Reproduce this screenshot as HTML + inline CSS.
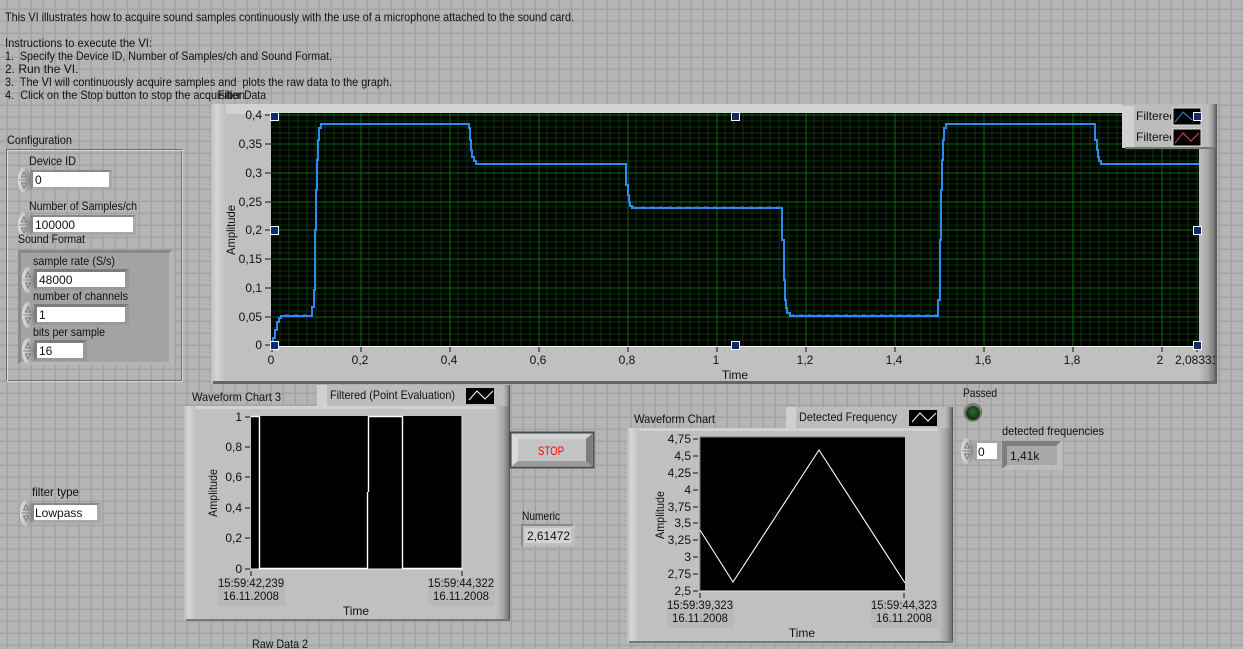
<!DOCTYPE html>
<html><head><meta charset="utf-8"><style>
html,body{margin:0;padding:0;background:#b4b4b4}
svg{display:block}
text{font-family:"Liberation Sans",sans-serif;font-size:12px;fill:#111}
.e{text-anchor:end}.m{text-anchor:middle}
</style></head><body>
<svg width="1243" height="649" viewBox="0 0 1243 649" xmlns="http://www.w3.org/2000/svg">
<defs>
<pattern id="bg" x="6" y="8" width="12" height="12" patternUnits="userSpaceOnUse">
<rect width="12" height="12" fill="#b4b4b4"/><rect x="0" width="1" height="12" fill="#adadad"/><rect y="0" width="12" height="1" fill="#adadad"/><rect x="1" width="1" height="12" fill="#a2a2a2"/><rect y="1" width="12" height="1" fill="#a2a2a2"/>
</pattern>
<linearGradient id="pl" x1="0" x2="1" y1="0" y2="0"><stop offset="0" stop-color="#bdbdbd"/><stop offset=".35" stop-color="#d6d6d6"/><stop offset="1" stop-color="#c0c0c0"/></linearGradient>
<linearGradient id="pr" x1="0" x2="1" y1="0" y2="0"><stop offset="0" stop-color="#c0c0c0"/><stop offset=".5" stop-color="#a8a8a8"/><stop offset="1" stop-color="#6a6a6a"/></linearGradient>
<linearGradient id="sp" x1="0" x2="1" y1="0" y2="0"><stop offset="0" stop-color="#e0e0e0"/><stop offset=".5" stop-color="#c4c4c4"/><stop offset="1" stop-color="#808080"/></linearGradient>
<radialGradient id="led" cx=".5" cy=".4" r=".6"><stop offset="0" stop-color="#2f6a30"/><stop offset="1" stop-color="#0c2c0e"/></radialGradient>
<symbol id="spin" viewBox="0 0 12 26" width="12" height="26">
<ellipse cx="6" cy="13" rx="6" ry="13" fill="url(#sp)"/><path d="M1 13H11" stroke="#888"/><path d="M6 5L3.5 10H8.5Z" fill="none" stroke="#777"/><path d="M6 21L3.5 16H8.5Z" fill="none" stroke="#777"/>
</symbol>
<symbol id="mk" viewBox="0 0 9 9" width="9" height="9"><rect x=".5" y=".5" width="8" height="8" fill="#0c2a6c" stroke="#fff"/></symbol>
</defs>
<rect width="1243" height="649" fill="url(#bg)"/>

<!-- top text -->
<text x="5" y="21" textLength="569" lengthAdjust="spacingAndGlyphs">This VI illustrates how to acquire sound samples continuously with the use of a microphone attached to the sound card.</text>
<text x="5" y="47" textLength="147" lengthAdjust="spacingAndGlyphs">Instructions to execute the VI:</text>
<text x="5" y="60" textLength="327" lengthAdjust="spacingAndGlyphs" xml:space="preserve">1.  Specify the Device ID, Number of Samples/ch and Sound Format.</text>
<text x="5" y="73">2.  Run the VI.</text>
<text x="5" y="86" textLength="387" lengthAdjust="spacingAndGlyphs" xml:space="preserve">3.  The VI will continuously acquire samples and  plots the raw data to the graph.</text>
<text x="5" y="99" textLength="240" lengthAdjust="spacingAndGlyphs" xml:space="preserve">4.  Click on the Stop button to stop the acquisition</text>
<text x="218" y="99" textLength="48" lengthAdjust="spacingAndGlyphs">Filter Data</text>

<!-- main graph panel -->
<rect x="211" y="104" width="1005" height="280" fill="#c0c0c0"/>
<rect x="211" y="104" width="1005" height="10" fill="#d2d2d2"/>
<rect x="211" y="104" width="15" height="278" fill="url(#pl)"/>
<rect x="1199" y="104" width="17" height="278" fill="url(#pr)"/>
<rect x="1215" y="104" width="2" height="280" fill="#5e5e5e"/>
<rect x="213" y="381" width="1004" height="3" fill="#666"/>
<rect x="271" y="113" width="928" height="233" fill="#000"/>
<g stroke="#0a360a" stroke-width="1" shape-rendering="crispEdges">
<path d="M280 113V346M289 113V346M298 113V346M307 113V346M316 113V346M325 113V346M334 113V346M343 113V346M352 113V346M369 113V346M378 113V346M387 113V346M396 113V346M405 113V346M414 113V346M423 113V346M432 113V346M441 113V346M458 113V346M467 113V346M476 113V346M485 113V346M494 113V346M503 113V346M512 113V346M521 113V346M530 113V346M547 113V346M556 113V346M565 113V346M574 113V346M583 113V346M592 113V346M601 113V346M610 113V346M619 113V346M636 113V346M645 113V346M654 113V346M663 113V346M672 113V346M681 113V346M690 113V346M699 113V346M708 113V346M725 113V346M734 113V346M743 113V346M752 113V346M761 113V346M770 113V346M779 113V346M788 113V346M797 113V346M814 113V346M823 113V346M832 113V346M841 113V346M850 113V346M859 113V346M868 113V346M877 113V346M886 113V346M903 113V346M912 113V346M921 113V346M930 113V346M939 113V346M948 113V346M957 113V346M966 113V346M975 113V346M992 113V346M1001 113V346M1010 113V346M1019 113V346M1028 113V346M1037 113V346M1046 113V346M1055 113V346M1064 113V346M1081 113V346M1090 113V346M1099 113V346M1108 113V346M1117 113V346M1126 113V346M1135 113V346M1144 113V346M1153 113V346M1170 113V346M1179 113V346M1188 113V346M1197 113V346"/>
<path d="M271 121H1199M271 127H1199M271 133H1199M271 138H1199M271 150H1199M271 156H1199M271 161H1199M271 167H1199M271 179H1199M271 184H1199M271 190H1199M271 196H1199M271 207H1199M271 213H1199M271 219H1199M271 225H1199M271 236H1199M271 242H1199M271 248H1199M271 253H1199M271 265H1199M271 271H1199M271 276H1199M271 282H1199M271 294H1199M271 299H1199M271 305H1199M271 311H1199M271 322H1199M271 328H1199M271 334H1199M271 340H1199"/>
</g>
<g stroke="#0c700c" stroke-width="1" shape-rendering="crispEdges">
<path d="M361 113V346M450 113V346M539 113V346M628 113V346M717 113V346M806 113V346M895 113V346M984 113V346M1073 113V346M1162 113V346"/>
<path d="M271 115H1199M271 144H1199M271 173H1199M271 202H1199M271 230H1199M271 259H1199M271 288H1199M271 317H1199"/>
</g>
<rect x="271" y="346" width="928" height="1" fill="#fff"/>
<polyline fill="none" stroke="#2a8cf0" stroke-width="2" shape-rendering="crispEdges" points="272,345 273,345 273,338 275,338 275,330 277,330 277,322 279,322 279,318 281,318 281,316 312,316 312,307 314,307 314,290 315,290 315,230 316,230 316,190 317,190 317,160 318,160 318,140 319,140 319,128 321,128 321,124 469,124 469,128 470,128 470,140 471,140 471,150 472,150 472,157 474,157 474,161 476,161 476,164 626,164 626,185 628,185 628,195 629,195 629,202 630,202 630,206 632,206 632,208 782,208 782,240 784,240 784,280 785,280 785,300 786,300 786,308 787,308 787,313 790,313 790,316 938,316 938,300 940,300 940,240 941,240 941,190 942,190 942,160 943,160 943,140 944,140 944,128 946,128 946,124 1095,124 1095,140 1097,140 1097,150 1098,150 1098,157 1099,157 1099,161 1101,161 1101,164 1199,164"/>
<path d="M632 207H782M790 315H938M285 315H312" stroke="#2a8cf0" stroke-width="1" stroke-dasharray="4 5" shape-rendering="crispEdges"/>

<!-- y ticks -->
<g stroke="#111" shape-rendering="crispEdges"><path d="M265 115H271M265 144H271M265 173H271M265 202H271M265 230H271M265 259H271M265 288H271M265 317H271M265 345H271"/>
<path d="M272 347V352M361 347V352M450 347V352M539 347V352M628 347V352M717 347V352M806 347V352M895 347V352M984 347V352M1073 347V352M1162 347V352M1197 347V352"/></g>
<text class="e" x="262" y="119">0,4</text><text class="e" x="262" y="148">0,35</text><text class="e" x="262" y="177">0,3</text><text class="e" x="262" y="206">0,25</text><text class="e" x="262" y="234">0,2</text><text class="e" x="262" y="263">0,15</text><text class="e" x="262" y="292">0,1</text><text class="e" x="262" y="321">0,05</text><text class="e" x="262" y="349">0</text>
<text class="m" x="271" y="364">0</text><text class="m" x="360" y="364">0,2</text><text class="m" x="449" y="364">0,4</text><text class="m" x="538" y="364">0,6</text><text class="m" x="627" y="364">0,8</text><text class="m" x="716" y="364">1</text><text class="m" x="805" y="364">1,2</text><text class="m" x="894" y="364">1,4</text><text class="m" x="983" y="364">1,6</text><text class="m" x="1072" y="364">1,8</text><text class="m" x="1160" y="364">2</text>
<svg x="1175" y="350" width="40" height="20"><text x="0" y="14">2,083312</text></svg>
<text class="m" x="735" y="379">Time</text>
<text class="m" transform="translate(235,230) rotate(-90)" textLength="50" lengthAdjust="spacingAndGlyphs">Amplitude</text>

<!-- legend top right -->
<rect x="1122" y="104" width="94" height="44" fill="#bcbcbc"/>
<rect x="1122" y="106" width="12" height="42" fill="#d2d2d2"/>
<rect x="1207" y="104" width="9" height="44" fill="url(#pr)"/>
<rect x="1125" y="147" width="90" height="2" fill="#777"/>
<svg x="1136" y="108" width="35" height="18"><text x="0" y="12">Filtered</text></svg>
<svg x="1136" y="129" width="35" height="18"><text x="0" y="12">Filtered</text></svg>
<rect x="1173" y="108" width="28" height="17" fill="#000" stroke="#ddd"/>
<polyline points="1175,122 1183,112 1192,120" fill="none" stroke="#2a8cf0"/>
<rect x="1173" y="129" width="28" height="17" fill="#000" stroke="#ddd"/>
<polyline points="1175,143 1183,133 1191,141 1199,133" fill="none" stroke="#e05050"/>

<use href="#mk" x="270" y="112"/><use href="#mk" x="731" y="112"/><use href="#mk" x="1193" y="112"/>
<use href="#mk" x="270" y="226"/><use href="#mk" x="1193" y="226"/>
<use href="#mk" x="270" y="341"/><use href="#mk" x="731" y="341"/><use href="#mk" x="1193" y="341"/>

<!-- Configuration -->
<text x="7" y="144" textLength="65" lengthAdjust="spacingAndGlyphs">Configuration</text>
<rect x="6.5" y="149.5" width="175" height="231" fill="none" stroke="#6e6e6e"/>
<rect x="7.5" y="150.5" width="175" height="231" fill="none" stroke="#d8d8d8"/>
<text x="29" y="165" textLength="47" lengthAdjust="spacingAndGlyphs">Device ID</text>
<rect x="30" y="170" width="82" height="20" fill="#a8a8a8"/><path d="M30 190V170H112L109 172H33V187Z" fill="#888"/>
<rect x="33" y="172" width="76" height="15" fill="#fff"/>
<text x="35" y="184">0</text>
<use href="#spin" x="18" y="167"/>
<text x="29" y="210" textLength="108" lengthAdjust="spacingAndGlyphs">Number of Samples/ch</text>
<rect x="30" y="215" width="106" height="20" fill="#a8a8a8"/><path d="M30 235V215H136L133 217H33V232Z" fill="#888"/>
<rect x="33" y="217" width="100" height="15" fill="#fff"/>
<text x="35" y="229">100000</text>
<use href="#spin" x="18" y="212"/>
<text x="18" y="243" textLength="67" lengthAdjust="spacingAndGlyphs">Sound Format</text>
<rect x="18" y="250" width="155" height="115" fill="#a3a3a3"/>
<path d="M18 365V250H173L170 253H21V362Z" fill="#8a8a8a"/>
<path d="M173 250V365H18L21 362H169V253Z" fill="#b6b6b6"/>
<text x="33" y="265" textLength="82" lengthAdjust="spacingAndGlyphs">sample rate (S/s)</text>
<rect x="34" y="269" width="95" height="21" fill="#989898"/><path d="M34 290V269H129L125 272H37V287Z" fill="#7c7c7c"/>
<rect x="37" y="272" width="88" height="15" fill="#fff"/>
<text x="39" y="284">48000</text>
<use href="#spin" x="22" y="267"/>
<text x="33" y="300" textLength="95" lengthAdjust="spacingAndGlyphs">number of channels</text>
<rect x="34" y="304" width="95" height="21" fill="#989898"/><path d="M34 325V304H129L125 307H37V322Z" fill="#7c7c7c"/>
<rect x="37" y="307" width="88" height="15" fill="#fff"/>
<text x="39" y="319">1</text>
<use href="#spin" x="22" y="302"/>
<text x="33" y="336" textLength="72" lengthAdjust="spacingAndGlyphs">bits per sample</text>
<rect x="34" y="340" width="53" height="21" fill="#989898"/><path d="M34 361V340H87L83 343H37V358Z" fill="#7c7c7c"/>
<rect x="37" y="343" width="46" height="15" fill="#fff"/>
<text x="39" y="355">16</text>
<use href="#spin" x="22" y="338"/>

<!-- filter type -->
<text x="32" y="496" textLength="47" lengthAdjust="spacingAndGlyphs">filter type</text>
<rect x="31" y="503" width="70" height="20" fill="#a8a8a8"/><path d="M31 523V503H101L97 505H34V520Z" fill="#888"/>
<rect x="34" y="505" width="63" height="15" fill="#fff"/>
<text x="35" y="517">Lowpass</text>
<use href="#spin" x="20" y="500"/>

<!-- Chart 3 -->
<text x="192" y="401" textLength="89" lengthAdjust="spacingAndGlyphs">Waveform Chart 3</text>
<rect x="317" y="385" width="192" height="21" fill="#bcbcbc"/>
<rect x="317" y="385" width="10" height="21" fill="#d0d0d0"/>
<rect x="502" y="385" width="8" height="21" fill="url(#pr)"/>
<text x="330" y="399" textLength="125" lengthAdjust="spacingAndGlyphs">Filtered (Point Evaluation)</text>
<rect x="466" y="388" width="28" height="16" fill="#000"/>
<polyline points="469,400 477,391 485,399 493,391" fill="none" stroke="#fff"/>
<rect x="184" y="406" width="326" height="215" fill="#c0c0c0"/>
<rect x="184" y="406" width="326" height="3" fill="#d2d2d2"/>
<rect x="184" y="406" width="12" height="214" fill="url(#pl)"/>
<rect x="496" y="406" width="14" height="214" fill="url(#pr)"/>
<rect x="509" y="385" width="1" height="236" fill="#555"/>
<rect x="186" y="619" width="324" height="2" fill="#777"/>
<rect x="251" y="416" width="211" height="153" fill="#000"/>
<path d="M251 569H462V416" fill="none" stroke="#e8e8e8"/>
<path d="M251 416.500H259.500V568.500H367.500V492M368.500 492V416.500H402.500V568.500H462" fill="none" stroke="#fff" stroke-width="1.400"/>
<g stroke="#111" shape-rendering="crispEdges"><path d="M245 417H250M245 447H250M245 477H250M245 508H250M245 538H250M245 569H250M251 571V576M462 571V576"/></g>
<text class="e" x="242" y="421">1</text><text class="e" x="242" y="451">0,8</text><text class="e" x="242" y="481">0,6</text><text class="e" x="242" y="512">0,4</text><text class="e" x="242" y="542">0,2</text><text class="e" x="242" y="573">0</text>
<text class="m" transform="translate(217,493) rotate(-90)" textLength="48" lengthAdjust="spacingAndGlyphs">Amplitude</text>
<rect x="218" y="578" width="67" height="28" fill="#b8b8b8"/><rect x="428" y="578" width="67" height="28" fill="#b8b8b8"/>
<text x="218" y="587" textLength="66" lengthAdjust="spacingAndGlyphs">15:59:42,239</text><text x="223" y="600" textLength="56" lengthAdjust="spacingAndGlyphs">16.11.2008</text>
<text x="428" y="587" textLength="66" lengthAdjust="spacingAndGlyphs">15:59:44,322</text><text x="433" y="600" textLength="56" lengthAdjust="spacingAndGlyphs">16.11.2008</text>
<text class="m" x="356" y="615">Time</text>
<text x="252" y="648" textLength="56" lengthAdjust="spacingAndGlyphs">Raw Data 2</text>

<!-- STOP -->
<rect x="510.500" y="432.500" width="83" height="35" fill="#c4c4c4" stroke="#4e4e4e" stroke-width="2"/>
<path d="M512 434H592L586 439H518Z" fill="#d4d4d4"/><path d="M512 434V466L518 461V439Z" fill="#dcdcdc"/>
<path d="M592 434V466L586 461V439Z" fill="#7c7c7c"/><path d="M512 466H592L586 461H518Z" fill="#9a9a9a"/>
<text x="538" y="455" style="fill:#f00" textLength="26" lengthAdjust="spacingAndGlyphs">STOP</text>

<!-- Numeric -->
<text x="522" y="520" textLength="38" lengthAdjust="spacingAndGlyphs">Numeric</text>
<rect x="522" y="525" width="53" height="21" fill="#c0c0c0"/><path d="M522 546V525H573" fill="none" stroke="#8a8a8a" stroke-width="2"/>
<rect x="525" y="528" width="46" height="15" fill="#d2d2d2"/>
<text x="527" y="540" textLength="43" lengthAdjust="spacingAndGlyphs">2,61472</text>

<!-- Waveform Chart -->
<text x="634" y="423" textLength="81" lengthAdjust="spacingAndGlyphs">Waveform Chart</text>
<rect x="786" y="407" width="166" height="21" fill="#bcbcbc"/>
<rect x="786" y="407" width="10" height="21" fill="#d0d0d0"/>
<rect x="944" y="407" width="8" height="21" fill="url(#pr)"/>
<text x="799" y="421" textLength="98" lengthAdjust="spacingAndGlyphs">Detected Frequency</text>
<rect x="909" y="410" width="28" height="16" fill="#000"/>
<polyline points="912,422 920,413 928,421 936,413" fill="none" stroke="#fff"/>
<rect x="627" y="428" width="326" height="215" fill="#c0c0c0"/>
<rect x="627" y="428" width="326" height="3" fill="#d2d2d2"/>
<rect x="627" y="428" width="12" height="214" fill="url(#pl)"/>
<rect x="938" y="428" width="15" height="214" fill="url(#pr)"/>
<rect x="952" y="407" width="1" height="236" fill="#555"/>
<rect x="629" y="641" width="324" height="2" fill="#777"/>
<rect x="700" y="437" width="205" height="154" fill="#000"/>
<path d="M700 591H905" stroke="#e8e8e8"/>
<path d="M700 437H905M700 437V591" stroke="#777" fill="none"/>
<polyline points="700,530 733,582 819,450 905,583" fill="none" stroke="#fff" stroke-width="1.100"/>
<g stroke="#111" shape-rendering="crispEdges"><path d="M693 439H698M693 456H698M693 473H698M693 490H698M693 507H698M693 523H698M693 540H698M693 557H698M693 574H698M693 591H698M700 593V598M904 593V598"/></g>
<text class="e" x="691" y="443">4,75</text><text class="e" x="691" y="460">4,5</text><text class="e" x="691" y="477">4,25</text><text class="e" x="691" y="494">4</text><text class="e" x="691" y="511">3,75</text><text class="e" x="691" y="527">3,5</text><text class="e" x="691" y="544">3,25</text><text class="e" x="691" y="561">3</text><text class="e" x="691" y="578">2,75</text><text class="e" x="691" y="595">2,5</text>
<text class="m" transform="translate(664,515) rotate(-90)" textLength="48" lengthAdjust="spacingAndGlyphs">Amplitude</text>
<rect x="667" y="600" width="67" height="28" fill="#b8b8b8"/><rect x="871" y="600" width="67" height="28" fill="#b8b8b8"/>
<text x="667" y="609" textLength="66" lengthAdjust="spacingAndGlyphs">15:59:39,323</text><text x="672" y="622" textLength="56" lengthAdjust="spacingAndGlyphs">16.11.2008</text>
<text x="871" y="609" textLength="66" lengthAdjust="spacingAndGlyphs">15:59:44,323</text><text x="876" y="622" textLength="56" lengthAdjust="spacingAndGlyphs">16.11.2008</text>
<text class="m" x="802" y="637">Time</text>

<!-- Passed -->
<text x="963" y="397" textLength="34" lengthAdjust="spacingAndGlyphs">Passed</text>
<circle cx="973.500" cy="413" r="9.500" fill="#d0d0d0"/><circle cx="973" cy="412.500" r="9.500" fill="#7a7a7a"/>
<circle cx="973" cy="413" r="7" fill="url(#led)"/>

<!-- detected frequencies -->
<text x="1002" y="435" textLength="102" lengthAdjust="spacingAndGlyphs">detected frequencies</text>
<rect x="973" y="441" width="28" height="20" fill="#a4a4a4"/>
<rect x="977" y="443" width="20" height="16" fill="#fff"/>
<text x="978" y="456">0</text>
<use href="#spin" x="961" y="438"/>
<rect x="1002" y="441" width="61" height="29" fill="#bcbcbc"/>
<path d="M1002 469V441H1061L1056 446H1007V465Z" fill="#7e7e7e"/>
<rect x="1007" y="446" width="50" height="19" fill="#a8a8a8"/>
<text x="1010" y="460">1,41k</text>
</svg>
</body></html>
